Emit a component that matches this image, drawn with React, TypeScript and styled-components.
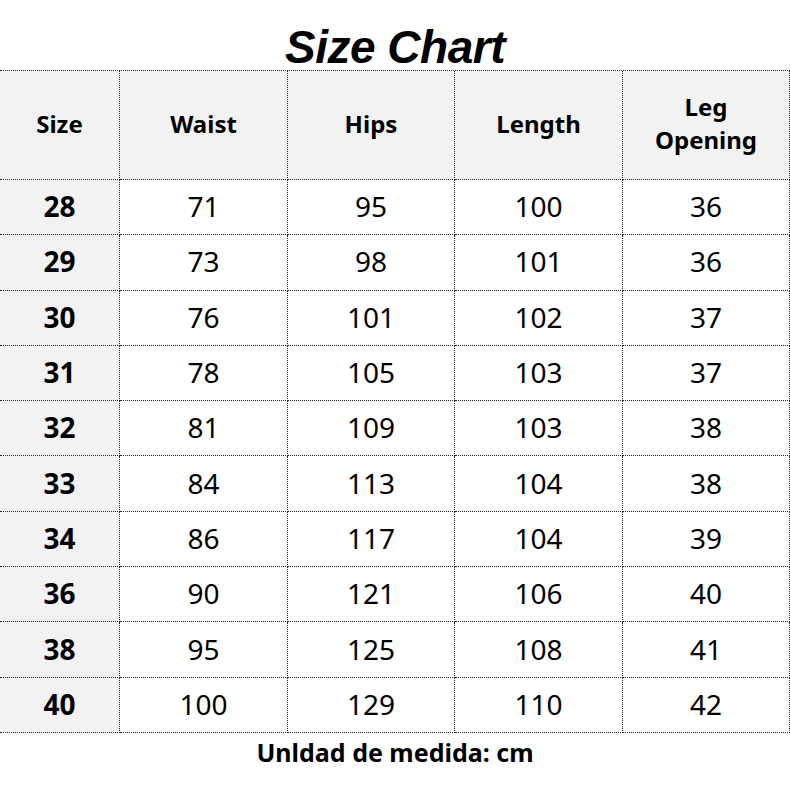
import React from 'react'
import styled, { createGlobalStyle } from 'styled-components'

const GlobalStyle = createGlobalStyle`
  html, body {
    margin: 0;
    padding: 0;
    background: #fff;
  }
  body {
    font-family: 'Noto Sans', 'Open Sans', sans-serif;
    color: #000;
  }
`

const Page = styled.div`
  width: 790px;
  height: 792px;
  background: #fff;
`

const Title = styled.h1`
  margin: 0;
  height: 70px;
  display: flex;
  align-items: flex-end;
  justify-content: center;
  font-family: 'Liberation Sans', Arial, sans-serif;
  font-style: italic;
  font-weight: 700;
  font-size: 46px;
  line-height: 1;
  letter-spacing: -0.5px;
`

const Grid = styled.div`
  display: grid;
  grid-template-columns: 120px 168px 167px 168px 167px;
  grid-template-rows: 109px repeat(10, 55.3px);
  border-top: 1px dotted #222;
`

const Cell = styled.div<{ $shaded?: boolean; $bold?: boolean; $head?: boolean }>`
  box-sizing: border-box;
  display: flex;
  align-items: center;
  justify-content: center;
  text-align: center;
  border-right: 1px dotted #222;
  border-bottom: 1px dotted #222;
  background: ${({ $shaded }) => ($shaded ? '#f2f2f2' : '#fff')};
  font-weight: ${({ $bold }) => ($bold ? 700 : 400)};
  font-size: ${({ $head }) => ($head ? '24px' : '28px')};
  line-height: ${({ $head }) => ($head ? '33px' : '1')};
  padding-bottom: ${({ $head }) => ($head ? '4px' : '2px')};
`

const Footer = styled.div`
  text-align: center;
  font-weight: 700;
  font-size: 25px;
  line-height: 38px;
`

const headers = ['Size', 'Waist', 'Hips', 'Length', 'Leg\nOpening']

const rows = [
  ['28', '71', '95', '100', '36'],
  ['29', '73', '98', '101', '36'],
  ['30', '76', '101', '102', '37'],
  ['31', '78', '105', '103', '37'],
  ['32', '81', '109', '103', '38'],
  ['33', '84', '113', '104', '38'],
  ['34', '86', '117', '104', '39'],
  ['36', '90', '121', '106', '40'],
  ['38', '95', '125', '108', '41'],
  ['40', '100', '129', '110', '42'],
]

const App = () => (
  <Page>
    <GlobalStyle />
    <Title>Size Chart</Title>
    <Grid>
      {headers.map((h) => (
        <Cell key={h} $shaded $bold $head>
          <span>
            {h.split('\n').map((line, i) => (
              <React.Fragment key={line}>
                {i > 0 && <br />}
                {line}
              </React.Fragment>
            ))}
          </span>
        </Cell>
      ))}
      {rows.map((row) =>
        row.map((value, col) => (
          <Cell key={`${row[0]}-${col}`} $shaded={col === 0} $bold={col === 0}>
            {value}
          </Cell>
        )),
      )}
    </Grid>
    <Footer>Unldad de medida: cm</Footer>
  </Page>
)

export default App
